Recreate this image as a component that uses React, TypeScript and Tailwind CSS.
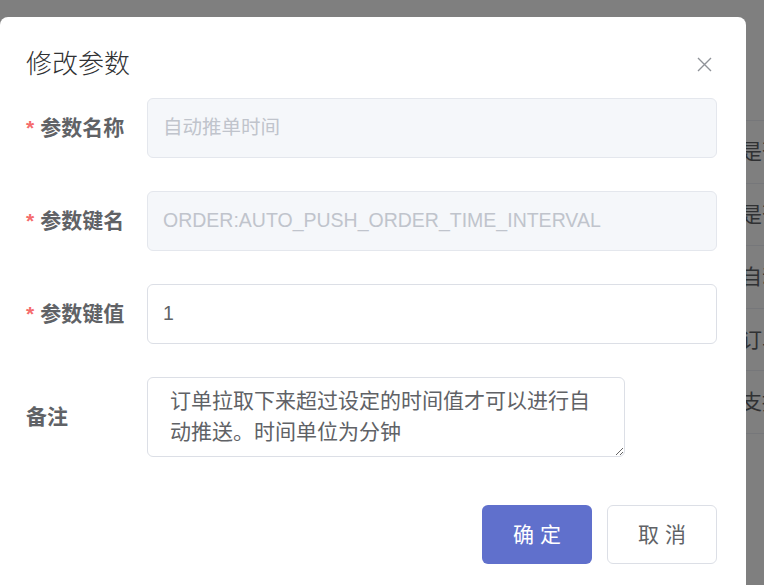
const rows = ["是否开启", "是否开启", "自动推单", "订单拉取", "支持推送", ""];

function Field({
  label,
  required,
  children,
}: {
  label: string;
  required?: boolean;
  children: React.ReactNode;
}) {
  return (
    <div className="flex items-center">
      <div className="w-[121px] shrink-0 text-[21px] font-bold text-[#606266]">
        {required && <span className="mr-[6px] text-[#f56c6c]">*</span>}
        {label}
      </div>
      <div className="flex-1">{children}</div>
    </div>
  );
}

export default function App() {
  return (
    <div
      className="relative h-[585px] w-[764px] overflow-hidden bg-[#7f7f7f]"
      style={{ fontFamily: '"Liberation Sans", "Noto Sans CJK SC", sans-serif' }}
    >
      {/* page behind the overlay */}
      <div className="pt-[120px]">
        {rows.map((r, i) => (
          <div
            key={i}
            className="flex h-[62.5px] items-center overflow-hidden whitespace-nowrap border-t border-[#76777a] pl-[741px] text-[21px] text-[#303133]"
          >
            {r}
          </div>
        ))}
      </div>

      {/* dialog */}
      <div className="absolute left-0 top-[17px] flex h-[600px] w-[746px] flex-col rounded-[8px] bg-white pl-[26px] pr-[29px] pt-[29px]">
        <div className="flex h-[36px] items-center justify-between">
          <span className="text-[26px] font-light leading-[36px] text-[#303133]">修改参数</span>
          <button className="mr-[5px] flex h-[15px] w-[15px] items-center justify-center">
            <svg width="15" height="15" viewBox="0 0 15 15" fill="none">
              <path d="M1 1L14 14M14 1L1 14" stroke="#909399" strokeWidth="1.4" />
            </svg>
          </button>
        </div>

        <div className="mt-[16px] flex flex-col gap-[33px]">
          <Field label="参数名称" required>
            <div className="flex h-[60px] items-center rounded-[6px] border border-[#e4e7ed] bg-[#f5f7fa] px-[15px] text-[19.5px] text-[#c0c4cc]">
              自动推单时间
            </div>
          </Field>
          <Field label="参数键名" required>
            <div className="flex h-[60px] items-center rounded-[6px] border border-[#e4e7ed] bg-[#f5f7fa] px-[15px] text-[19.5px] text-[#c0c4cc]">
              ORDER:AUTO_PUSH_ORDER_TIME_INTERVAL
            </div>
          </Field>
          <Field label="参数键值" required>
            <div className="flex h-[60px] items-center rounded-[6px] border border-[#dcdfe6] bg-white px-[15px] text-[19.5px] text-[#606266]">
              1
            </div>
          </Field>
          <Field label="备注">
            <textarea
              readOnly
              value="订单拉取下来超过设定的时间值才可以进行自动推送。时间单位为分钟"
              className="block h-[80px] w-[478px] rounded-[6px] border border-[#dcdfe6] bg-white py-[7px] pl-[22px] pr-[18px] text-[21px] leading-[31px] text-[#606266] outline-none"
            />
          </Field>
        </div>

        <div className="mt-[48px] flex justify-end gap-[15px]">
          <button className="h-[59px] w-[110px] rounded-[6px] bg-[#6070cc] text-[21px] text-white">
            确 定
          </button>
          <button className="h-[59px] w-[110px] rounded-[6px] border border-[#dcdfe6] bg-white text-[21px] text-[#606266]">
            取 消
          </button>
        </div>
      </div>
    </div>
  );
}
